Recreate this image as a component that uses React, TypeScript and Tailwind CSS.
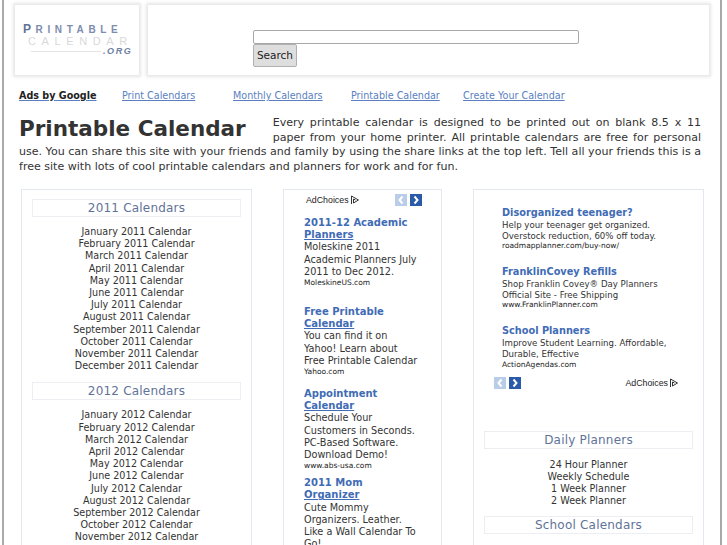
const months = ["January", "February", "March", "April", "May", "June", "July", "August", "September", "October", "November", "December"];
const planners = ["24 Hour Planner", "Weekly Schedule", "1 Week Planner", "2 Week Planner"];

const middleAds = [
  { title: "2011-12 Academic", titleEnd: "Planners", lines: ["Moleskine 2011", "Academic Planners July", "2011 to Dec 2012."], url: "MoleskineUS.com", gap: "mb-[18px]" },
  { title: "Free Printable", titleEnd: "Calendar", lines: ["You can find it on", "Yahoo! Learn about", "Free Printable Calendar"], url: "Yahoo.com", gap: "mb-[11px]" },
  { title: "Appointment", titleEnd: "Calendar", lines: ["Schedule Your", "Customers in Seconds.", "PC-Based Software.", "Download Demo!"], url: "www.abs-usa.com", gap: "mb-[6px]" },
  { title: "2011 Mom", titleEnd: "Organizer", lines: ["Cute Mommy", "Organizers. Leather.", "Like a Wall Calendar To", "Go!"], url: "", gap: "" },
];

const rightAds = [
  { title: "Disorganized teenager?", lines: ["Help your teenager get organized.", "Overstock reduction, 60% off today."], url: "roadmapplanner.com/buy-now/" },
  { title: "FranklinCovey Refills", lines: ["Shop Franklin Covey® Day Planners", "Official Site - Free Shipping"], url: "www.FranklinPlanner.com" },
  { title: "School Planners", lines: ["Improve Student Learning. Affordable,", "Durable, Effective"], url: "ActionAgendas.com" },
];

function SectionHeading({ children }: { children: string }) {
  return (
    <div className="h-[18px] border border-[#eceef2] text-center text-[12px] leading-[16px] tracking-[0.2px] text-[#5f7398]">
      {children}
    </div>
  );
}

function AdArrows() {
  return (
    <div className="flex gap-[3px]">
      <div className="flex h-[12px] w-[12px] items-center justify-center bg-[#b9cce8]">
        <svg width="8" height="10" viewBox="0 0 8 10" fill="none" stroke="#ffffff" strokeWidth="2">
          <path d="M5.5 1.5 2.5 5l3 3.5" />
        </svg>
      </div>
      <div className="flex h-[12px] w-[12px] items-center justify-center bg-[#2a5aa8]">
        <svg width="8" height="10" viewBox="0 0 8 10" fill="none" stroke="#ffffff" strokeWidth="2">
          <path d="M2.5 1.5 5.5 5l-3 3.5" />
        </svg>
      </div>
    </div>
  );
}

function AdChoices() {
  return (
    <div className="flex items-center gap-[2px] font-['Liberation_Sans',sans-serif] text-[8.8px] leading-[12px] text-[#222222]">
      <span>AdChoices</span>
      <svg width="8" height="10" viewBox="0 0 8 10" fill="none" stroke="#333333" strokeWidth="1">
        <path d="M.5 1v8M.5 1l7 4-5 3V4l2 1" />
      </svg>
    </div>
  );
}

export default function App() {
  return (
    <div className="h-[545px] w-[727px] overflow-hidden bg-white font-['DejaVu_Sans',sans-serif] text-[#333333]">
      <div className="ml-[2px] h-full w-[720px] border-x-2 border-[#a9a9a9] bg-white">
        <div className="flex gap-[9px] pl-[11px] pt-[5px]">
          <div className="flex h-[70px] w-[124px] shrink-0 flex-col bg-white pl-[8px] pt-[19px] font-['Liberation_Sans',sans-serif] shadow-[0_0_3px_2px_#e6e6e6]">
            <div className="whitespace-nowrap text-[10px] font-bold leading-[10px] tracking-[4.6px] text-[#7d8dad]">
              <span className="text-[12px] text-[#5f7398]">P</span>RINTABLE
            </div>
            <div className="whitespace-nowrap pl-[5px] text-[11px] leading-[13px] tracking-[5.6px] text-[#d9d9d9]">CALENDAR</div>
            <div className="relative h-[10px]">
              <div className="absolute left-[8px] top-[3px] h-px w-[70px] bg-[#e4e4e4]" />
              <div className="absolute left-[80px] top-[-2px] text-[9px] font-bold italic leading-[10px] tracking-[1.6px] text-[#6d7fa3]">.ORG</div>
            </div>
          </div>
          <div className="h-[70px] w-[561px] bg-white pl-[105px] pt-[25px] shadow-[0_0_3px_2px_#e6e6e6]">
            <div className="h-[14px] w-[326px] rounded-[2px] border border-[#a8a8a8] bg-white" />
            <div className="flex h-[23px] w-[44px] items-center justify-center rounded-[2px] border border-[#b0b0b0] bg-[#dedede] text-[10.5px] text-[#222222]">
              Search
            </div>
          </div>
        </div>

        <nav className="ml-[15px] mt-[15px] flex whitespace-nowrap text-[9.6px] leading-[12px] text-[#5b7fc0] underline">
          <span className="w-[78px] font-bold text-[#222222]">Ads by Google</span>
          <span className="ml-[25px] w-[74px]">Print Calendars</span>
          <span className="ml-[37px] w-[89px]">Monthly Calendars</span>
          <span className="ml-[29px] w-[89px]">Printable Calendar</span>
          <span className="ml-[23px]">Create Your Calendar</span>
        </nav>

        <div className="ml-[15px] mt-[14px] h-[73px] w-[682px] text-justify text-[11.05px] leading-[14.6px]">
          <h1 className="float-left mr-[27px] text-[21.5px] font-bold leading-[25px] text-[#333333]">Printable Calendar</h1>
          Every printable calendar is designed to be printed out on blank 8.5 x 11 paper from your home printer. All printable calendars are free for personal use. You can share this site with your friends and family by using the share links at the top left. Tell all your friends this is a free site with lots of cool printable calendars and planners for work and for fun.
        </div>

        <div className="ml-[17px] flex items-start">
          <div className="h-[400px] w-[231px] shrink-0 border border-[#e3e7f0] px-[10px] pt-[9px] text-center text-[9.6px] leading-[12.2px]">
            <SectionHeading>2011 Calendars</SectionHeading>
            <ul className="mb-[10px] mt-[9px]">
              {months.map((m) => (
                <li key={m}>{m} 2011 Calendar</li>
              ))}
            </ul>
            <SectionHeading>2012 Calendars</SectionHeading>
            <ul className="mt-[9px]">
              {months.map((m) => (
                <li key={m}>{m} 2012 Calendar</li>
              ))}
            </ul>
          </div>

          <div className="ml-[31px] h-[400px] w-[159px] shrink-0 border border-[#e3e7f0] pl-[20px] pt-[4px]">
            <div className="flex items-center justify-between pl-[2px] pr-[19px]">
              <AdChoices />
              <AdArrows />
            </div>
            <div className="mt-[11px] flex flex-col">
              {middleAds.map((ad) => (
                <div key={ad.title} className={`text-[9.7px] leading-[12.2px] ${ad.gap}`}>
                  <div className="text-[10px] font-bold text-[#3f6cb5]">{ad.title}</div>
                  <div className="text-[10px] font-bold text-[#3f6cb5] underline">{ad.titleEnd}</div>
                  {ad.lines.map((l) => (
                    <div key={l}>{l}</div>
                  ))}
                  {ad.url && <div className="text-[7.5px] leading-[10px] text-[#222222]">{ad.url}</div>}
                </div>
              ))}
            </div>
          </div>

          <div className="ml-[31px] h-[400px] w-[231px] shrink-0 border border-[#e3e7f0] px-[10px] pt-[17px]">
            <div className="flex flex-col gap-[16px] pl-[18px]">
              {rightAds.map((ad) => (
                <div key={ad.title} className="text-[8.6px] leading-[10.6px]">
                  <div className="mb-[1px] text-[9.75px] font-bold leading-[12px] text-[#3f6cb5]">{ad.title}</div>
                  {ad.lines.map((l) => (
                    <div key={l}>{l}</div>
                  ))}
                  <div className="text-[7.5px] leading-[9px] text-[#222222]">{ad.url}</div>
                </div>
              ))}
            </div>
            <div className="mt-[8px] flex items-center justify-between pl-[10px] pr-[15px]">
              <AdArrows />
              <AdChoices />
            </div>
            <div className="mt-[42px]">
              <SectionHeading>Daily Planners</SectionHeading>
            </div>
            <ul className="mb-[9px] mt-[10px] text-center text-[9.6px] leading-[12.2px]">
              {planners.map((p) => (
                <li key={p}>{p}</li>
              ))}
            </ul>
            <SectionHeading>School Calendars</SectionHeading>
          </div>
        </div>
      </div>
    </div>
  );
}
